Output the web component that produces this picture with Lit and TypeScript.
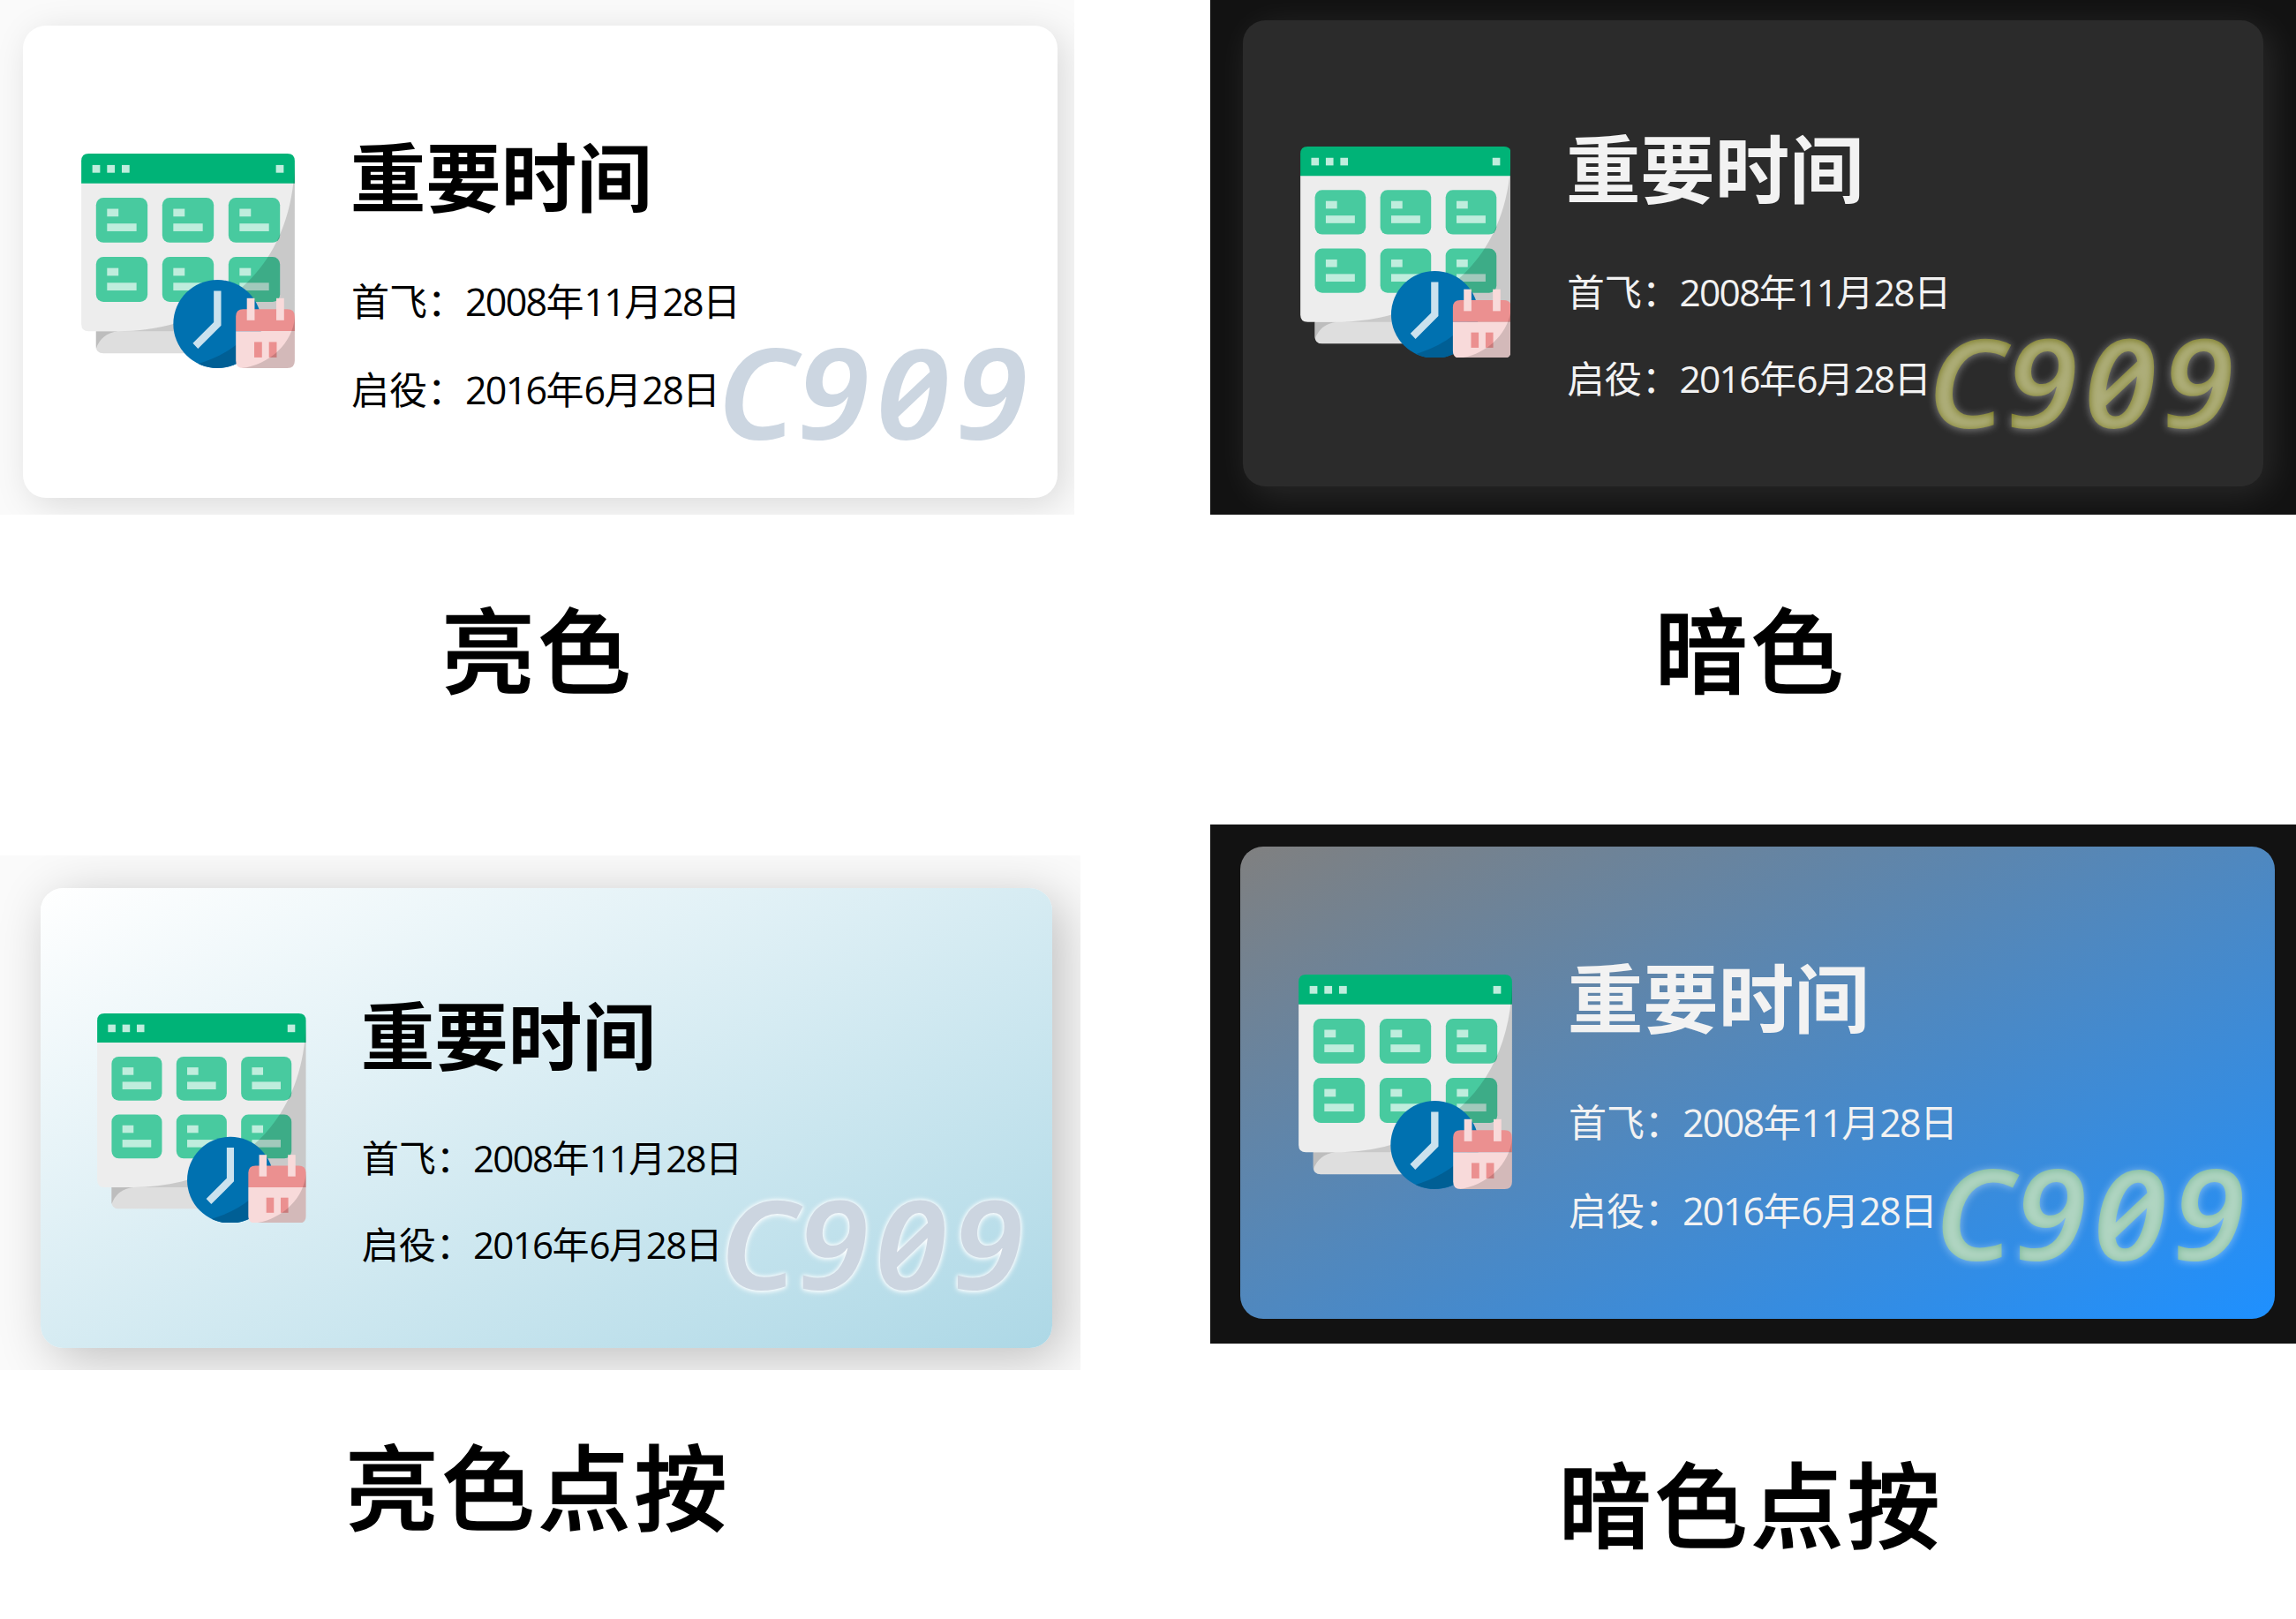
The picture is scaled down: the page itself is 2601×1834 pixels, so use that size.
import { LitElement, html, css, svg } from "lit";
import { customElement, property } from "lit/decorators.js";

const tile = (x: number, y: number) => svg`
  <rect x=${x} y=${y} width="14" height="12.2" rx="2" fill="#48ca9f"/>
  <rect x=${x + 3} y=${y + 3} width="3.1" height="2.1" fill="#bfeddd"/>
  <rect x=${x + 3} y=${y + 7} width="8" height="2.1" fill="#bfeddd"/>`;

@customElement("calendar-icon")
class CalendarIcon extends LitElement {
  static styles = css`
    :host { display: block; }
    .art { display: block; width: 100%; height: 100%; }
  `;
  render() {
    return html`<svg class="art" viewBox="0 0 58 58.3">
      <path d="M4 46H40V54.3H6Q4 54.3 4 52.3Z" fill="#dedede"/>
      <path d="M4 48.3H10Q5.5 48.8 4 53Z" fill="#bdbdbd"/>
      <path d="M0 8H58V48.3H2Q0 48.3 0 46.3Z" fill="#ededed"/>
      <path d="M0 8.1V2Q0 0 2 0H56Q58 0 58 2V8.1Z" fill="#00b377"/>
      <rect x="3" y="3.1" width="2.1" height="2.1" fill="#bfeddd"/>
      <rect x="7" y="3.1" width="2.1" height="2.1" fill="#bfeddd"/>
      <rect x="11" y="3.1" width="2.1" height="2.1" fill="#bfeddd"/>
      <rect x="52.9" y="3.1" width="2.1" height="2.1" fill="#bfeddd"/>
      ${tile(4, 12)}${tile(22, 12)}${tile(40, 12)}
      ${tile(4, 28.1)}${tile(22, 28.1)}${tile(40, 28.1)}
      <path d="M58 3V48.3H10C34 48.3 57 34 58 3Z" fill="#000" fill-opacity=".15"/>
      <circle cx="37" cy="46.3" r="12" fill="#0071b0"/>
      <path d="M31.8 57.1C39 55 44.5 51 47.5 46H49V46.3A12 12 0 0 1 31.8 57.1Z" fill="#005f95"/>
      <path d="M36 37.3H38V46.7L31.7 53L30.3 51.5L36 45.8Z" fill="#cbe2ee"/>
      <path d="M42 48.3V44.3Q42 42.3 44 42.3H56Q58 42.3 58 44.3V48.3Z" fill="#eb9090"/>
      <path d="M42 48.3H58V56.3Q58 58.3 56 58.3H44Q42 58.3 42 56.3Z" fill="#f8dada"/>
      <rect x="45" y="39.3" width="2.1" height="6" fill="#f8dada"/>
      <rect x="53" y="39.3" width="2.1" height="6" fill="#f8dada"/>
      <rect x="47" y="51.2" width="2.1" height="4.2" fill="#eb9090"/>
      <rect x="51" y="51.2" width="2.1" height="4.2" fill="#eb9090"/>
      <path d="M58 44.5V56.3Q58 58.3 56 58.3H43.5C51 57.5 57.5 51.5 58 44.5Z" fill="#000" fill-opacity=".15"/>
    </svg>`;
  }
}

@customElement("time-card")
class TimeCard extends LitElement {
  @property({ reflect: true }) variant = "light";
  static styles = css`
    :host { display: block; font-size: 10px; }
    .panel { box-sizing: border-box; overflow: hidden; height: 100%; }
    .card {
      box-sizing: border-box; position: relative; height: 100%;
      border-radius: 2.6em; display: flex; align-items: flex-start;
    }
    .icon { width: 24.2em; height: 24.3em; margin: 14.5em 0 0 6.55em; flex: none; }
    .body { margin-left: 6.45em; display: flex; flex-direction: column; align-items: flex-start; white-space: nowrap; }
    .title {
      margin: 11.65em 0 0 -.12em; font: bold 1em/1 "Noto Sans CJK SC", sans-serif;
    }
    .title-text { font-size: 8.55em; line-height: 1.2; display: block; }
    .row { font: 4.3em/2.3256 "Open Sans", "Noto Sans CJK SC", sans-serif; }
    .first { margin-top: 1.01em; }
    .num { letter-spacing: -.04em; }
    .mark { position: absolute; right: -.3em; bottom: 3.05em; }
    .mark-text {
      display: block; padding: .14em .2em; white-space: nowrap;
      font: italic 600 14.2em/1 "Noto Sans", "Open Sans", sans-serif;
      font-feature-settings: "zero" 1;
      color: transparent; -webkit-background-clip: text; background-clip: text;
      transform: scaleX(1.055); transform-origin: right;
    }
    .digits { letter-spacing: .047em; }

    :host([variant="light"]) { font-size: 10px; }
    :host([variant="light"]) .panel { background: #fafafa; padding: 29px 19px 19px 26px; }
    :host([variant="light"]) .card { background: #fff; color: #000; box-shadow: 8px 8px 40px rgba(0,0,0,.13); }
    :host([variant="light"]) .mark-text { color: #ccd6e1; }

    :host([variant="dark"]) { font-size: 9.87px; }
    :host([variant="dark"]) .panel { background: #121212; padding: 22.5px 37px 32px 37px; }
    :host([variant="dark"]) .card { background: #2b2b2b; color: #f2f2f2; box-shadow: 8px 8px 40px rgba(255,255,255,.1); }
    :host([variant="dark"]) .mark-text { background-color: #74741a; text-shadow: 0 1px 9px rgba(255,255,255,.42); }

    :host([variant="light-press"]) { font-size: 9.78px; }
    :host([variant="light-press"]) .panel { background: #fafafa; padding: 37px 32px 25px 46px; }
    :host([variant="light-press"]) .card { background: linear-gradient(to bottom right, #fff, #add8e6); color: #000; box-shadow: 12px 12px 60px rgba(0,0,0,.24); }
    :host([variant="light-press"]) .mark-text { color: #ccd5e0; text-shadow: 0 0 4px #fff, 0 1px 7px #fff; }

    :host([variant="dark-press"]) { font-size: 10px; }
    :host([variant="dark-press"]) .panel { background: #121212; padding: 25px 24px 28px 34px; }
    :host([variant="dark-press"]) .card { background: linear-gradient(to bottom right, #808080, #1e90ff); color: #f2f2f2; }
    :host([variant="dark-press"]) .mark-text { background-color: #78b796; text-shadow: 0 1px 9px rgba(255,255,255,.42); }
  `;
  render() {
    const n = (t: string) => html`<span class="num">${t}</span>`;
    return html`<div class="panel"><div class="card">
      <calendar-icon class="icon"></calendar-icon>
      <div class="body">
        <div class="title"><span class="title-text">重要时间</span></div>
        <div class="row first">首飞：${n("2008")}年${n("11")}月${n("28")}日</div>
        <div class="row">启役：${n("2016")}年${n("6")}月${n("28")}日</div>
      </div>
      <div class="mark"><span class="mark-text">C<span class="digits">909</span></span></div>
    </div></div>`;
  }
}

@customElement("app-root")
class AppRoot extends LitElement {
  static styles = css`
    :host { display: block; width: 2601px; height: 1834px; background: #fff; overflow: hidden; }
    .board { display: flex; justify-content: space-between; height: 100%; }
    .col { display: flex; flex-direction: column; }
    .left { width: 1224px; }
    .right { width: 1230px; }
    .c1 { width: 1217px; height: 583px; }
    .c2 { height: 583px; }
    .c3 { height: 583px; margin-top: 158px; }
    .c4 { height: 588px; margin-top: 123px; }
    .label {
      box-sizing: border-box; height: 160px; margin-top: 68px; padding-right: 5px;
      font: 500 105px/160px "Noto Sans CJK SC", sans-serif; letter-spacing: 4px;
      -webkit-text-stroke: 1.5px #000;
      color: #000; text-align: center; white-space: nowrap;
    }
    .l3 { margin-top: 47px; }
    .l4 { margin-top: 97px; }
  `;
  render() {
    return html`<div class="board">
      <div class="col left">
        <time-card class="c1" variant="light"></time-card>
        <div class="label">亮色</div>
        <time-card class="c3" variant="light-press"></time-card>
        <div class="label l3">亮色点按</div>
      </div>
      <div class="col right">
        <time-card class="c2" variant="dark"></time-card>
        <div class="label">暗色</div>
        <time-card class="c4" variant="dark-press"></time-card>
        <div class="label l4">暗色点按</div>
      </div>
    </div>`;
  }
}
